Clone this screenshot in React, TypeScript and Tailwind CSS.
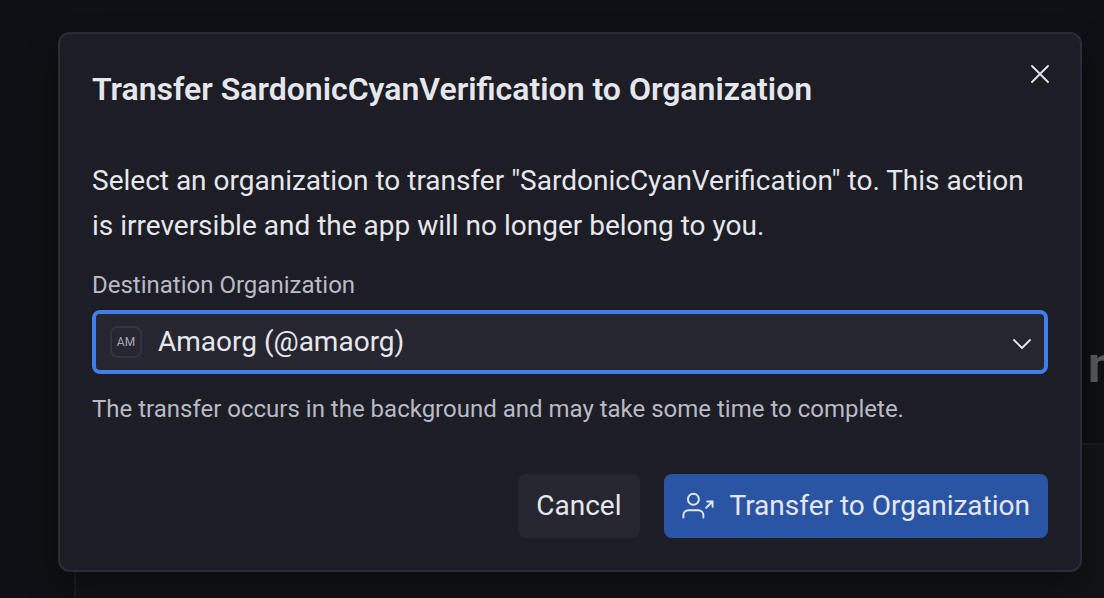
import { useState } from "react";

const organizations = [{ handle: "amaorg", name: "Amaorg" }];

function CloseIcon() {
  return (
    <svg viewBox="0 0 18 18" className="size-[18px]" fill="none" stroke="currentColor" strokeWidth="1.8" strokeLinecap="round" aria-hidden="true">
      <path d="M1 1 17 17M17 1 1 17" />
    </svg>
  );
}

function ChevronIcon() {
  return (
    <svg viewBox="0 0 18 10" className="h-[10px] w-[18px]" fill="none" stroke="currentColor" strokeWidth="1.8" strokeLinecap="round" strokeLinejoin="round" aria-hidden="true">
      <path d="M1 1 9 9 17 1" />
    </svg>
  );
}

function TransferIcon() {
  return (
    <svg viewBox="0 0 32 32" className="size-8" fill="none" stroke="currentColor" strokeWidth="1.9" strokeLinecap="round" strokeLinejoin="round" aria-hidden="true">
      <circle cx="11.4" cy="9.3" r="5.5" />
      <path d="M1.400 27.500V25.200A5 5 0 0 1 6.400 20.200H16.400A5 5 0 0 1 21.400 25.200V27.500" />
      <path d="M24.200 17.800 30.600 11.500M25.300 11.500H30.600V16.800" />
    </svg>
  );
}

function Backdrop() {
  return (
    <div aria-hidden="true" className="absolute inset-0 overflow-hidden bg-[#0e1015] pl-[74px]">
      <div className="flex h-[443px] items-end justify-end pb-[50px]">
        <span className="-mr-3 text-[50px] leading-[56px] font-bold text-[#58595c]">n</span>
      </div>
      <div className="h-full border-t-2 border-l-2 border-[#1b1c22] bg-[#111317]" />
    </div>
  );
}

export default function App() {
  const [organization, setOrganization] = useState("amaorg");

  return (
    <div className="relative min-h-screen overflow-hidden bg-[#0e1015] pt-8 pr-[22px] pb-[26px] pl-[58px] font-['Roboto','Liberation_Sans',sans-serif] text-[#e6e7ec]">
      <Backdrop />
      <section
        role="dialog"
        aria-labelledby="dialog-title"
        className="relative rounded-xl border-2 border-[#2b2c36] bg-[#1c1d25] p-8 shadow-[0_16px_32px_rgba(0,0,0,0.35)]"
      >
        <header className="flex items-start justify-between">
          <h1 id="dialog-title" className="text-[32px] leading-[46px] font-semibold">
            Transfer SardonicCyanVerification to Organization
          </h1>
          <button type="button" aria-label="Close" className="-mt-2 -mr-2 flex size-8 items-center justify-center">
            <CloseIcon />
          </button>
        </header>

        <p className="mt-[46px] text-[28px] leading-[45px]">
          Select an organization to transfer "SardonicCyanVerification" to. This action is irreversible and the app will no longer belong to you.
        </p>

        <label htmlFor="organization" className="mt-[21px] block text-[24px] leading-8 text-[#b9bac6]">
          Destination Organization
        </label>
        <div className="relative mt-[9px]">
          <select
            id="organization"
            value={organization}
            onChange={(event) => setOrganization(event.target.value)}
            className="block h-16 w-full appearance-none rounded-lg border-4 border-[#427eea] bg-[#25262f] pr-12 pl-[62px] text-[28px] leading-[40px] outline-none"
          >
            {organizations.map(({ handle, name }) => (
              <option key={handle} value={handle}>
                {name} (@{handle})
              </option>
            ))}
          </select>
          <span className="pointer-events-none absolute inset-y-4 left-[18px] flex w-8 items-center justify-center rounded-lg border-2 border-[#33343f] text-[12px] text-[#a9aab6]">
            AM
          </span>
          <span className="pointer-events-none absolute inset-y-0 right-[17px] flex items-center pt-1">
            <ChevronIcon />
          </span>
        </div>
        <p className="mt-[19px] text-[24px] leading-8 text-[#b9bac6]">
          The transfer occurs in the background and may take some time to complete.
        </p>

        <footer className="mt-[49px] flex justify-end gap-6">
          <button type="button" className="h-16 rounded-lg bg-[#25262f] px-[18px] text-[28px]">
            Cancel
          </button>
          <button type="button" className="flex h-16 items-center gap-4 rounded-lg bg-[#2a55a4] px-[18px] text-[28px]">
            <TransferIcon />
            Transfer to Organization
          </button>
        </footer>
      </section>
    </div>
  );
}
